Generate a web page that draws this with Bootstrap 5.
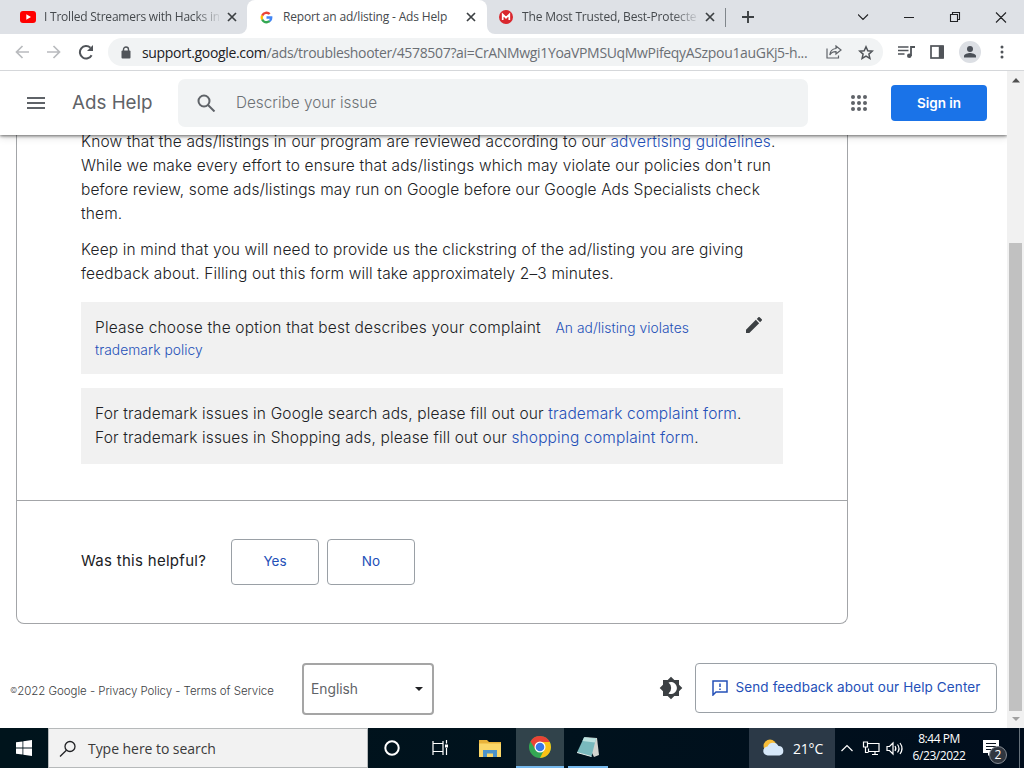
<!DOCTYPE html>
<html lang="en">
<head>
  <meta charset="UTF-8" />
  <meta name="viewport" content="width=device-width, initial-scale=1.0" />
  <title>Report an ad/listing - Ads Help</title>
  <link href="https://cdn.jsdelivr.net/npm/bootstrap@5.3.3/dist/css/bootstrap.min.css" rel="stylesheet" />
  <style>
    body {
      width: 1024px;
      height: 768px;
      overflow: hidden;
      font-family: Inter, Roboto, sans-serif;
      color: #202124;
    }
    svg { display: block; flex: none; }
    a { text-decoration: none; color: #2450b8; }

    /* browser window */
    .ui-font { font-family: "Open Sans", "Noto Sans", sans-serif; }
    .tab-strip { height: 34px; background: #dee1e6; }
    .tab-item { height: 34px; font-size: 12px; letter-spacing: -.17px; color: #45494d; }
    .tab-item span { overflow: hidden; white-space: nowrap; line-height: 34px; }
    .tab-first { width: 247px; padding: 0 10px 0 20px; border-bottom-right-radius: 8px; background: #dee1e6; }
    .tab-active { width: 240px; padding: 0 11px 0 13px; background: #fff; border-radius: 8px 8px 0 0; }
    .tab-active span { margin-left: 10px; }
    .tab-third { width: 238px; padding: 0 10px 0 12px; border-bottom-left-radius: 8px; background: #dee1e6; }
    .tab-third span { margin-left: 9px; }
    .tab-first span { margin-left: 8px; letter-spacing: -.22px; }
    .tab-under { background: #fff; }
    .tab-fade { -webkit-mask-image: linear-gradient(90deg, #000 86%, transparent 102%); }
    .tab-sep { width: 1px; height: 19px; background: #80868b; }
    .toolbar { height: 37px; border-bottom: 1px solid #d5d7da; background: #fff; color: #5f6368; padding: 0 15px 0 15px; }
    .omnibox { width: 775px; height: 28px; border-radius: 14px; background: #f1f3f4; margin-left: 13px; padding: 0 9px 0 13px; font-size: 14px; }
    .url-text { width: 680px; margin-left: 11px; white-space: nowrap; letter-spacing: -.33px; color: #6b6f74; }
    .url-text b { font-weight: 400; color: #202124; }
    .tool-icon { margin-left: 15px; }
    .avatar { width: 22px; height: 22px; background: #dcdfe4; }

    /* help center page */
    .viewport { height: 657px; }
    .page-pane { width: 1007px; overflow: hidden; }
    .help-header { height: 64px; z-index: 2; background: #fff; padding: 0 20px 0 27px; box-shadow: 0 1px 3px rgba(0,0,0,.55), 0 2px 8px rgba(0,0,0,.15); color: #5f6368; }
    .product-name { font-size: 18.8px; width: 106px; margin-left: 27px; padding-top: 1px; white-space: nowrap; }
    .search-box { width: 630px; height: 48px; border-radius: 7px; background: #f1f3f4; padding-left: 19px; font-size: 15.3px; font-weight: 300; color: #6d7175; }
    .sign-in { width: 96px; height: 36px; background: #1a73e8; border-radius: 4px; color: #fff; font-size: 13.5px; font-weight: 600; }
    .help-card { width: 832px; height: 489px; margin-left: 16px; border: 1px solid #a3a5a8; border-top: 0; border-radius: 0 0 8px 8px; }
    .article { height: 366px; padding-left: 64px; border-bottom: 1px solid #a3a5a8; font-size: 15.5px; line-height: 24px; letter-spacing: .145px; font-weight: 300; }
    .article p { margin-bottom: 12px; white-space: nowrap; }
    .article p:first-child { margin-top: -5px; }
    .tight { letter-spacing: .1px; }
    .answer { width: 702px; background: #f1f1f1; padding: 14px 14px 0; white-space: nowrap; }
    .answer-one { height: 72px; margin-top: 16px; line-height: 22px; padding-top: 15px; }
    .answer-two { height: 76px; margin-top: 14px; }
    .question { letter-spacing: .19px; }
    .choice { font-size: 13.8px; line-height: 20px; letter-spacing: .06px; margin-left: 10px; }
    .pencil { margin-right: 7px; }
    .vote-row { height: 122px; padding-left: 64px; font-size: 15px; }
    .vote-label { width: 150px; letter-spacing: .29px; padding-bottom: 2px; }
    .line-btn { border: 1px solid #9aa0a6; border-radius: 4px; color: #2450b8; background: #fff; font-size: 13.5px; }
    .vote-btn { width: 88px; height: 46px; padding-bottom: 2px; }
    .page-footer { height: 104px; padding: 39px 10px 0; color: #5f6368; }
    .legal { width: 292px; font-size: 11.5px; font-weight: 300; letter-spacing: -.05px; line-height: 55px; white-space: nowrap; color: #3c4043; }
    .legal small { font-size: 8px; vertical-align: 2px; }
    .lang-select { width: 132px; height: 52px; border: 2px solid #a5a5a5; border-radius: 4px; padding: 0 9px 0 7px; font-size: 13.8px; }
    .theme-icon { margin-top: 13px; }
    .feedback { width: 302px; height: 50px; margin-left: 12px; letter-spacing: .1px; white-space: nowrap; padding-bottom: 2px; }
    .scroll-track { width: 17px; background: #f1f1f1; }
    .scroll-top { margin-top: 7px; }
    .scroll-thumb { width: 13px; height: 468px; background: #c1c1c1; margin-top: 157px; }

    /* desktop taskbar */
    .taskbar { height: 40px; background: linear-gradient(90deg, #00141c 0%, #00121d 55%, #000d1c 100%); color: #fff; }
    .start-btn, .task-btn { width: 48px; height: 40px; }
    .task-search { width: 320px; height: 40px; background: #f2f2f2; border: 1px solid #b6b9ba; font-size: 14px; letter-spacing: -.05px; color: #3a3a3a; padding: 1px 0 0 10px; }
    .task-search span { margin-left: 11px; }
    .task-on { background: #31434b; margin-left: 4px; }
    .task-line { width: 40px; height: 2px; background: #76b9ed; }
    .weather { width: 86px; height: 40px; background: #2b3947; padding-left: 13px; font-size: 14px; letter-spacing: -.2px; }
    .clock { width: 56px; font-size: 12px; line-height: 17.5px; letter-spacing: -.45px; white-space: nowrap; padding-bottom: 2px; }
    .notice { width: 52px; height: 40px; padding-left: 16px; }
    .notice-count { left: 22px; top: 18px; width: 18px; height: 18px; border: 1px solid #858b92; background: #30363f; font-size: 12px; line-height: 16px; }
    .desk-edge { width: 1px; height: 40px; background: #65707a; }
  </style>
</head>
<body class="d-flex flex-column">

  <div class="tab-strip d-flex align-items-start ui-font">
    <div class="tab-under">
      <div class="tab-item tab-first d-flex align-items-center">
        <svg width="16" height="12" viewBox="0 0 16 12"><rect width="16" height="12" rx="3" fill="#f00"/><path d="M6.3 3.3v5.4L11 6z" fill="#fff"/></svg>
        <span class="tab-fade flex-grow-1">I Trolled Streamers with Hacks in</span>
        <svg class="ms-2" width="10" height="10" viewBox="0 0 10 10" stroke="#3c4043" stroke-width="1.7"><path d="M1 1l8 8M9 1L1 9"/></svg>
      </div>
    </div>
    <div class="tab-item tab-active d-flex align-items-center">
      <svg width="13" height="13" viewBox="2 2 44 44"><path fill="#FFC107" d="M12.900 19.500l-6.600-4.800A20 20 0 0 0 6.200 33l6.500-5a12 12 0 0 1 .2-8.500z"/><path fill="#EA4335" d="M6.300 14.700l6.600 4.800A12 12 0 0 1 32 15l5.700-5.700A20 20 0 0 0 6.300 14.700z"/><path fill="#34A853" d="M24 44c5.200 0 9.900-2 13.400-5.200l-6.200-5.200A12 12 0 0 1 12.700 28l-6.500 5C9.500 39.600 16.200 44 24 44z"/><path fill="#4285F4" d="M43.600 20H24v8h11.300a12 12 0 0 1-4.100 5.600l6.200 5.200C37 39.200 44 34 44 24c0-1.300-.1-2.700-.4-4z"/></svg>
      <span class="flex-grow-1">Report an ad/listing - Ads Help</span>
      <svg width="10" height="10" viewBox="0 0 10 10" stroke="#3c4043" stroke-width="1.7"><path d="M1 1l8 8M9 1L1 9"/></svg>
    </div>
    <div class="tab-under">
      <div class="tab-item tab-third d-flex align-items-center">
        <svg width="14" height="14" viewBox="0 0 14 14"><circle cx="7" cy="7" r="7" fill="#d9272e"/><path d="M3.7 10V4.500L7 7.700l3.300-3.200V10" fill="none" stroke="#fff" stroke-width="1.700"/></svg>
        <span class="tab-fade flex-grow-1">The Most Trusted, Best-Protected</span>
        <svg class="ms-2" width="10" height="10" viewBox="0 0 10 10" stroke="#3c4043" stroke-width="1.7"><path d="M1 1l8 8M9 1L1 9"/></svg>
      </div>
    </div>
    <div class="d-flex align-items-center h-100 flex-grow-1">
      <div class="tab-sep"></div>
      <svg class="ms-3" width="12" height="12" viewBox="0 0 12 12" stroke="#3c4043" stroke-width="1.9"><path d="M6 0v12M0 6h12"/></svg>
      <svg class="ms-auto" width="166" height="28" viewBox="858 0 166 28" fill="none" stroke="#202124" stroke-width="1.1"><path d="M858 11.500l5 5 5-5M904 14.500h10M950.500 11.500h7v7h-7zM952.500 11.500v-2h7v7h-2M996 9.500l10 10M1006 9.500l-10 10"/></svg>
    </div>
  </div>

  <div class="toolbar d-flex align-items-center ui-font">
    <svg width="14" height="14" viewBox="0 0 14 14" fill="none" stroke="#b9bbbe" stroke-width="1.7"><path d="M14 7H1.500M7.500 1L1.500 7l6 6"/></svg>
    <svg class="ms-3" width="16" height="14" viewBox="-2 0 16 14" fill="none" stroke="#b9bbbe" stroke-width="1.7"><path d="M0 7h12.500M6.500 1l6 6-6 6"/></svg>
    <svg class="ms-3" width="18" height="16" viewBox="-1 0 18 16"><path d="M13.600 11.200A6.200 6.200 0 1 1 12.400 3.800" fill="none" stroke="#505459" stroke-width="2"/><path d="M15 1v6H9z" fill="#505459"/></svg>
    <div class="omnibox d-flex align-items-center">
      <svg width="10" height="13" viewBox="0 0 10 13"><rect x="0.500" y="4.500" width="9" height="8" rx="1" fill="#505459"/><path d="M2.500 5V3.500a2.500 2.500 0 0 1 5 0V5" fill="none" stroke="#505459" stroke-width="1.400"/></svg>
      <div class="url-text"><b>support.google.com</b>/ads/troubleshooter/4578507?ai=CrANMwgi1YoaVPMSUqMwPifeqyASzpou1auGKj5-h...</div>
      <svg class="ms-auto" width="16" height="14" viewBox="0 0 16 14" fill="none" stroke="#5f6368" stroke-width="1.2"><path d="M1 3.500V13h11.500v-2.500M10 1l5 4-5 4V6.600C7 6.500 5 7.700 3.800 10 4 6.500 6 4 10 3.500z"/></svg>
      <svg class="ms-3" width="16" height="15" viewBox="0 0 16 15" fill="none" stroke="#505459" stroke-width="1.5"><path d="M8 1.800l1.800 4 4.400.4-3.300 2.900 1 4.300L8 11.100l-3.900 2.300 1-4.300L1.800 6.200l4.400-.4z"/></svg>
    </div>
    <svg class="tool-icon" width="17" height="14" viewBox="0 0 17 14"><path d="M0 2h10.500M0 5.500h10.500M0 9h6.500" stroke="#505459" stroke-width="1.5"/><path d="M13 11V2h4" fill="none" stroke="#505459" stroke-width="1.8"/><circle cx="11.300" cy="10.800" r="2.300" fill="#505459"/></svg>
    <svg class="tool-icon" width="14" height="14" viewBox="0 0 14 14"><rect x="1" y="1" width="12" height="12" fill="none" stroke="#505459" stroke-width="1.7"/><path d="M8.800 1H14v12H8.800z" fill="#505459"/></svg>
    <div class="avatar rounded-circle tool-icon d-flex align-items-center justify-content-center">
      <svg width="12" height="12" viewBox="0 0 12 12" fill="#4b5058"><circle cx="6" cy="3" r="3"/><path d="M0 11.500V10c0-2 4-3 6-3s6 1 6 3v1.500z"/></svg>
    </div>
    <svg class="ms-auto" width="14" height="14" viewBox="0 0 14 14" fill="#505459"><circle cx="7" cy="2" r="1.5"/><circle cx="7" cy="7" r="1.5"/><circle cx="7" cy="12" r="1.5"/></svg>
  </div>

  <div class="viewport d-flex">
    <div class="page-pane d-flex flex-column">
      <header class="help-header position-relative d-flex align-items-center">
        <svg width="18" height="12" viewBox="0 0 18 12" stroke="#5f6368" stroke-width="2"><path d="M0 1h18M0 6h18M0 11h18"/></svg>
        <div class="product-name">Ads Help</div>
        <div class="search-box d-flex align-items-center">
          <svg width="19" height="18" viewBox="0 0 19 18" fill="none" stroke="#5f6368" stroke-width="2"><circle cx="7" cy="7" r="5.5"/><path d="M11 11l6.500 6.500"/></svg>
          <span class="ms-3 ps-1">Describe your issue</span>
        </div>
        <svg class="ms-auto" width="16" height="16" viewBox="0 0 16 16" fill="#5f6368"><circle cx="2" cy="2" r="2"/><circle cx="8" cy="2" r="2"/><circle cx="14" cy="2" r="2"/><circle cx="2" cy="8" r="2"/><circle cx="8" cy="8" r="2"/><circle cx="14" cy="8" r="2"/><circle cx="2" cy="14" r="2"/><circle cx="8" cy="14" r="2"/><circle cx="14" cy="14" r="2"/></svg>
        <button class="sign-in btn border-0 p-0 ms-4">Sign in</button>
      </header>

      <main class="overflow-hidden flex-grow-1">
        <section class="help-card">
          <div class="article overflow-hidden">
            <p>Know that the ads/listings in our program are reviewed according to our <a href="#">advertising guidelines</a>.<br>
              While we make every effort to ensure that ads/listings which may violate our policies don't run<br>
              <span class="tight">before review, some ads/listings may run on Google before our Google Ads Specialists check</span><br>
              them.</p>
            <p>Keep in mind that you will need to provide us the clickstring of the ad/listing you are giving<br>
              feedback about. Filling out this form will take approximately 2–3 minutes.</p>
            <div class="answer answer-one d-flex justify-content-between align-items-start">
              <div><span class="question">Please choose the option that best describes your complaint</span> <a class="choice" href="#">An ad/listing violates<br>trademark policy</a></div>
              <svg class="pencil" width="16" height="16" viewBox="3 3 18 18" fill="#3c4043"><path d="M3 17.250V21h3.750L17.810 9.940l-3.750-3.750zM20.710 7.040a1 1 0 0 0 0-1.410l-2.340-2.340a1 1 0 0 0-1.410 0l-1.830 1.830 3.750 3.750z"/></svg>
            </div>
            <div class="answer answer-two">For trademark issues in Google search ads, please fill out our <a href="#">trademark complaint form</a>.<br>
              For trademark issues in Shopping ads, please fill out our <a href="#">shopping complaint form</a>.</div>
          </div>
          <div class="vote-row d-flex align-items-center">
            <div class="vote-label">Was this helpful?</div>
            <button class="line-btn vote-btn">Yes</button>
            <button class="line-btn vote-btn ms-2">No</button>
          </div>
        </section>

        <footer class="page-footer d-flex align-items-start">
          <div class="legal"><small>©</small>2022 Google - Privacy Policy - Terms of Service</div>
          <div class="lang-select d-flex align-items-center justify-content-between">English
            <svg width="8" height="4" viewBox="0 0 8 4"><path d="M0 0h8L4 4z" fill="#202124"/></svg>
          </div>
          <svg class="theme-icon ms-auto" width="24" height="24" viewBox="0 0 24 24"><path d="M20 8.690V4h-4.690L12 .690 8.690 4H4v4.690L.690 12 4 15.310V20h4.690L12 23.310 15.310 20H20v-4.690L23.310 12z" fill="#3c4043"/><path d="M9.500 6.500A6 6 0 1 1 9.500 17.500A7 7 0 0 0 9.500 6.500z" fill="#fff"/></svg>
          <button class="line-btn feedback d-flex align-items-center justify-content-center">
            <svg width="16" height="16" viewBox="0 0 16 16" fill="none" stroke="#2450b8" stroke-width="1.5"><path d="M1 15V1h14v11H4z"/><path d="M8 3.500v3.500M8 8.500V10"/></svg>
            <span class="ms-2">Send feedback about our Help Center</span>
          </button>
        </footer>
      </main>
    </div>

    <div class="scroll-track d-flex flex-column align-items-center">
      <svg class="scroll-top" width="8" height="8" viewBox="0 0 8 8"><path d="M0 4.500h8L4 0z" fill="#505050"/></svg>
      <div class="scroll-thumb"></div>
      <svg class="mt-auto mb-1" width="8" height="8" viewBox="0 0 8 8"><path d="M0 1h8L4 5z" fill="#a0a0a0"/></svg>
    </div>
  </div>

  <div class="taskbar d-flex align-items-center ui-font">
    <div class="start-btn d-flex align-items-center justify-content-center">
      <svg width="16" height="16" viewBox="0 0 16 16" fill="#fff"><path d="M0 2.300l6.500-.9v6.200H0zM7.300 1.300L16 0v7.600H7.300zM0 8.400h6.500v6.200L0 13.700zM7.300 8.400H16V16l-8.700-1.300z"/></svg>
    </div>
    <div class="task-search d-flex align-items-center">
      <svg width="18" height="18" viewBox="0 0 18 18" fill="none" stroke="#202124" stroke-width="1.3"><circle cx="11" cy="6.500" r="5"/><path d="M7.400 10.200L1 16.500"/></svg>
      <span>Type here to search</span>
    </div>
    <div class="task-btn d-flex align-items-center justify-content-center">
      <svg width="16" height="16" viewBox="0 0 16 16"><circle cx="8" cy="8" r="6.700" fill="none" stroke="#fff" stroke-width="2"/></svg>
    </div>
    <div class="task-btn d-flex align-items-center justify-content-center">
      <svg width="17" height="16" viewBox="0 0 17 16" fill="none" stroke="#fff" stroke-width="1.2"><path d="M1 3.500h10v8H1zM1 1v2.500M11 1v2.500M1 11.500V15M11 11.500V15M14.500 0v3.500M14.500 8v7"/><path d="M13 4.500h3v3h-3z" fill="#fff" stroke="none"/></svg>
    </div>
    <div class="task-btn d-flex align-items-center justify-content-center">
      <svg class="ms-1" width="22" height="19" viewBox="0 0 22 19"><path d="M0 1h8l2 2h12v15H0z" fill="#e9b33a"/><path d="M0 4.500h22V18H0z" fill="#fbd768"/><path d="M4 18v-7h14v7h-4v-3.500H8V18z" fill="#4c93cb"/></svg>
    </div>
    <div class="task-btn task-on d-flex flex-column align-items-center">
      <svg class="my-auto" width="24" height="24" viewBox="0 0 24 24"><circle cx="12" cy="12" r="11" fill="#34a853"/><path d="M12 12L7.500 14.500 2.500 6.500A11 11 0 0 1 21.800 7H12z" fill="#ea4335"/><path d="M12 7h9.800A11 11 0 0 1 12 23l4.300-8.500z" fill="#fbc116"/><circle cx="12" cy="12" r="5.500" fill="#fff"/><circle cx="12" cy="12" r="4.300" fill="#3977e8"/></svg>
      <div class="task-line w-100"></div>
    </div>
    <div class="task-btn d-flex flex-column align-items-center">
      <svg class="my-auto" width="24" height="22" viewBox="0 0 24 22"><path d="M8 1l13 1 2 17-5 2z" fill="#d2d4cf"/><path d="M8 1.500l12 1-4.500 18L1 16.500z" fill="#79b9bd"/><path d="M8 1.500l12 1-1 4L6.500 5z" fill="#bde2df"/><path d="M1 16.500L15.500 20.500" stroke="#e4eeeb"/></svg>
      <div class="task-line"></div>
    </div>
    <div class="weather ms-auto d-flex align-items-center">
      <svg width="23" height="20" viewBox="0 0 23 20"><circle cx="8" cy="8" r="6.500" fill="#f7bd38"/><path d="M6 17.500a4.500 4.500 0 0 1-.5-9 6 6 0 0 1 11-.5 4.800 4.800 0 0 1 1 9.500z" fill="#d5e7f8"/></svg>
      <span class="ms-2">21°C</span>
    </div>
    <svg width="76" height="20" viewBox="835 0 76 20" fill="none" stroke="#fff" stroke-width="1.2"><path d="M841.500 13l5.500-5.500 5.500 5.500M867.500 5.500H879v8h-10.500v-3M872 16.500h6M875 13.500v3M863.500 4h4v5h-4zM865.500 9v5.500h3M887 8.500h2.500l3.500-3.500v11l-3.500-3.500H887zM895 8q1.700 2.500 0 5M897.500 6.500q3 4 0 8M900 5q4 5.500 0 11"/></svg>
    <div class="clock text-center">8:44 PM<br>6/23/2022</div>
    <div class="notice position-relative d-flex align-items-center">
      <svg width="17" height="18" viewBox="0 0 17 18"><path d="M0 1h16v13H8l-3 3v-3H0z" fill="#fff"/><path d="M3 4.500h10M3 7.500h10M3 10.500h7" stroke="#09131e"/></svg>
      <div class="notice-count position-absolute rounded-circle text-center">2</div>
    </div>
    <div class="desk-edge me-1"></div>
  </div>

  <script src="https://cdn.jsdelivr.net/npm/bootstrap@5.3.3/dist/js/bootstrap.bundle.min.js"></script>
</body>
</html>
